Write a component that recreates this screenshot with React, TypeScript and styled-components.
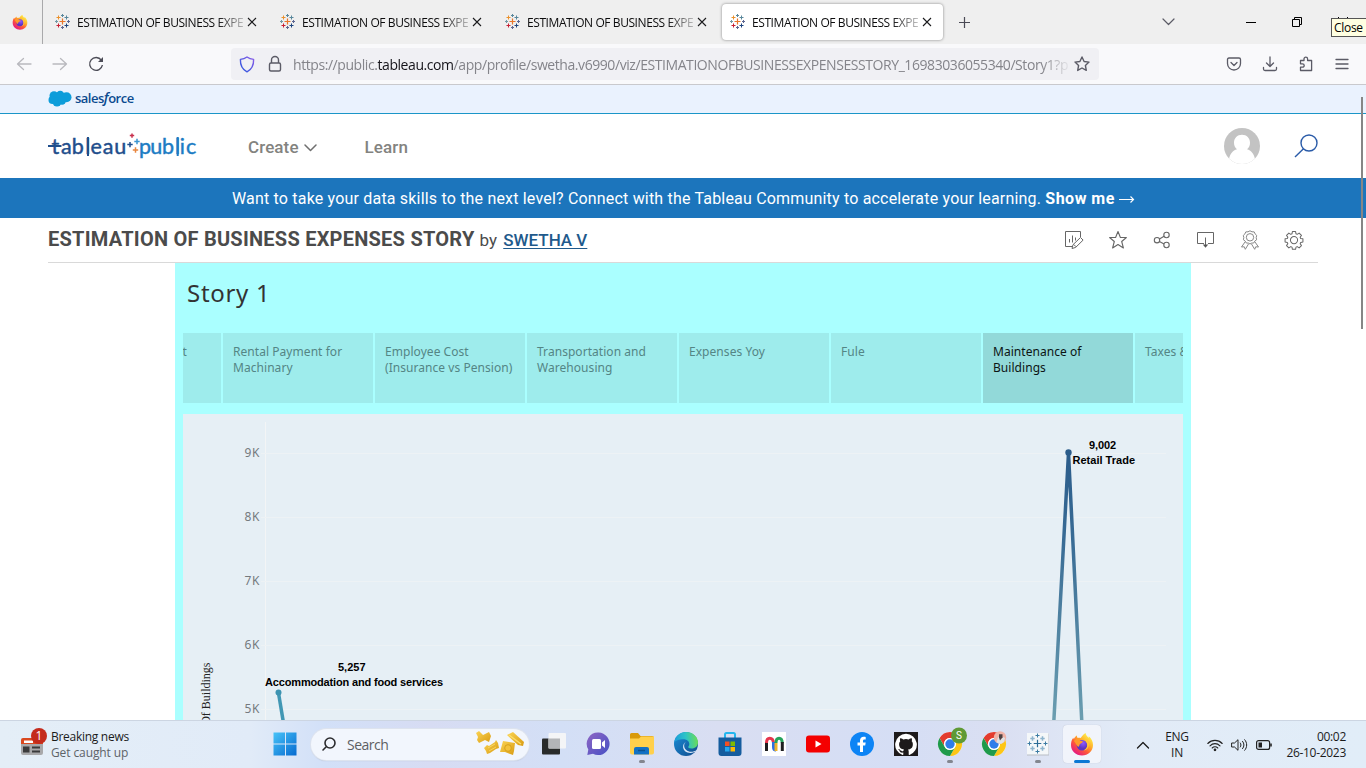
import React from 'react';
import styled, { createGlobalStyle, css } from 'styled-components';

const GlobalStyle = createGlobalStyle`
  * { box-sizing: border-box; }
  body { margin: 0; overflow: hidden; background: #fff; }
  svg { display: block; flex: none; }
`;

const segoe = css`font-family: 'Open Sans', 'Noto Sans', sans-serif;`;
const benton = css`font-family: Roboto, 'Liberation Sans', sans-serif;`;

const Screen = styled.div`
  position: relative;
  width: 1366px;
  height: 768px;
  display: flex;
  flex-direction: column;
  overflow: hidden;
  ${segoe}
`;

/* ---------- browser chrome ---------- */

const TabStrip = styled.div`
  height: 44px;
  flex: none;
  display: flex;
  align-items: center;
  background: #efefef;
`;
const PinnedTab = styled.div`
  width: 43px;
  height: 44px;
  padding: 14px 0 0 12px;
  margin-right: 4px;
  border-right: 1px solid #a9a9ab;
`;
const Tab = styled.div<{ $active?: boolean }>`
  width: 221px;
  height: 36px;
  margin-right: 4px;
  padding: 0 11px 0 8px;
  display: flex;
  align-items: center;
  border-radius: 4px;
  background: ${p => (p.$active ? '#fff' : 'transparent')};
  box-shadow: ${p => (p.$active ? '0 0 3px rgba(0,0,0,.45)' : 'none')};
`;
const TabTitle = styled.span`
  width: 168px;
  margin: 0 2px 0 6px;
  white-space: nowrap;
  font-size: 12px;
  letter-spacing: -0.42px;
  line-height: 18px;
  padding-top: 1px;
  color: #0c0c0d;
  mask-image: linear-gradient(to right, #000 83%, transparent 104%);
`;
const Spacer = styled.div`flex: 1;`;
const WindowControls = styled.div`
  display: flex;
  align-items: center;
  gap: 36px;
  padding: 0 18px 0 71px;
`;
const CloseTip = styled.div`
  position: absolute;
  left: 1331px;
  top: 18px;
  width: 36px;
  height: 19px;
  border: 1px solid #555;
  background: #ffffe1;
  color: #000;
  font-size: 12px;
  line-height: 18px;
  padding-left: 2px;
  letter-spacing: -0.3px;
`;

const Toolbar = styled.div`
  height: 41px;
  flex: none;
  display: flex;
  align-items: center;
  background: #f9f9fb;
  border-bottom: 1px solid #c9c9cd;
`;
const NavButtons = styled.div`
  width: 231px;
  padding-left: 16px;
  display: flex;
  gap: 20px;
`;
const UrlBar = styled.div`
  width: 868px;
  height: 32px;
  padding: 0 8px 0 8px;
  display: flex;
  align-items: center;
  background: #f0f0f4;
  border-radius: 4px;
`;
const Url = styled.span`
  width: 775px;
  margin: 0 6px 0 10px;
  padding-top: 2px;
  white-space: nowrap;
  font-size: 14px;
  letter-spacing: -0.43px;
  line-height: 22px;
  color: #84848a;
  mask-image: linear-gradient(to right, #000 96.5%, transparent 100.5%);
  b { font-weight: 400; color: #15141a; }
`;
const ToolIcons = styled.div`
  display: flex;
  gap: 20px;
  margin-left: 127px;
`;

/* ---------- page ---------- */

const SalesforceBar = styled.div`
  height: 29px;
  flex: none;
  padding: 0 0 1px 48px;
  display: flex;
  align-items: center;
  gap: 3px;
  background: #eaf2fe;
  border-bottom: 1px solid #1b96c8;
`;
const SalesforceName = styled.span`
  font: 600 13px/18px 'Open Sans', sans-serif;
  color: #0b4a8f;
  letter-spacing: -0.5px;
  padding-bottom: 2px;
  i { font-size: 14px; }
`;
const Header = styled.header`
  height: 64px;
  flex: none;
  padding: 0 48px;
  display: flex;
  align-items: center;
  background: #fff;
`;
const HeaderLink = styled.a<{ $left: number }>`
  ${benton}
  display: flex;
  align-items: center;
  gap: 5px;
  margin-left: ${p => p.$left}px;
  padding-top: 2px;
  font-size: 17px;
  font-weight: 500;
  letter-spacing: 0.1px;
  color: #83837f;
`;
const Banner = styled.div`
  ${benton}
  height: 40px;
  flex: none;
  display: flex;
  align-items: center;
  padding-left: 232px;
  white-space: pre;
  background: #1c75bc;
  color: #fff;
  font-size: 16px;
  letter-spacing: 0.185px;
  b { font-weight: 700; letter-spacing: 0.5px; }
`;
const TitleRow = styled.div`
  ${benton}
  height: 45px;
  flex: none;
  margin: 0 48px;
  display: flex;
  align-items: center;
  border-bottom: 1px solid #d9d9d9;
`;
const VizTitle = styled.h1`
  margin: 0;
  padding-bottom: 2px;
  font-size: 20px;
  font-weight: 700;
  letter-spacing: 0.24px;
  color: #4b4b4b;
  white-space: nowrap;
`;
const Author = styled.span`
  margin-left: 5px;
  font-size: 17px;
  color: #4b4b4b;
  a { margin-left: 2px; font-weight: 500; color: #1f5a8c; text-decoration: underline; text-underline-offset: 2px; }
`;
const Actions = styled.div`
  display: flex;
  gap: 24px;
  padding-right: 14px;
`;

const Story = styled.main`
  flex: 1;
  min-height: 0;
  width: 1016px;
  margin-left: 175px;
  padding: 0 8px;
  overflow: hidden;
  background: #aaffff;
`;
const StoryTitle = styled.h2`
  margin: 0;
  height: 70px;
  padding: 13px 0 0 4px;
  font: 400 24px/34px 'Noto Sans', sans-serif;
  letter-spacing: 0.7px;
  color: #333;
`;
const StoryPoints = styled.div`
  display: flex;
  gap: 2px;
  height: 70px;
  overflow: hidden;
  margin-bottom: 11px;
`;
const Point = styled.div<{ $active?: boolean; $first?: boolean }>`
  flex: none;
  width: 150px;
  margin-left: ${p => (p.$first ? -112 : 0)}px;
  padding: 11px 10px;
  text-align: ${p => (p.$first ? 'right' : 'left')};
  padding-right: ${p => (p.$first ? 34 : 4)}px;
  font: 400 12px/16px 'Noto Sans', sans-serif;
  white-space: pre-line;
  letter-spacing: 0.05px;
  background: ${p => (p.$active ? '#92d9d9' : '#9eecec')};
  color: ${p => (p.$active ? '#0c1414' : '#548585')};
`;
const AxisText = styled.text`
  font: 12px 'Noto Sans', sans-serif;
  fill: #757a7e;
`;
const MarkText = styled.text`
  font: bold 11px 'Liberation Sans', Arial, sans-serif;
  fill: #000;
`;
const AxisTitle = styled.text`
  font: 12px 'Liberation Serif', serif;
  fill: #222;
`;
const PageScroll = styled.div`
  position: absolute;
  left: 1361px;
  top: 97px;
  width: 2px;
  height: 232px;
  background: #868686;
`;

/* ---------- taskbar ---------- */

const Taskbar = styled.div`
  height: 48px;
  flex: none;
  display: flex;
  align-items: center;
  border-top: 1px solid #ccd5e2;
  background: linear-gradient(90deg, #e4eef7 0, #e1ebf8 250px, #d2e0f8 325px, #d7dcf3 430px, #d3dff6 560px, #d9def2 720px, #d5def5 900px, #dadff2 1000px, #e2ebf7 1130px, #e1edf8 100%);
`;
const News = styled.div`
  width: 263px;
  padding: 0 0 3px 18px;
  display: flex;
  align-items: center;
  gap: 3px;
`;
const NewsText = styled.div`
  font-size: 12px;
  line-height: 16px;
  color: #1b1b1b;
  letter-spacing: -0.28px;
  padding-top: 4px;
  span { display: block; color: #5e6368; letter-spacing: -0.1px; }
`;
const Slot = styled.div<{ $dot?: boolean; $active?: boolean }>`
  position: relative;
  width: 44px;
  height: 47px;
  padding-bottom: 2px;
  display: flex;
  align-items: center;
  justify-content: center;
  &::after {
    content: '';
    display: ${p => (p.$dot || p.$active ? 'block' : 'none')};
    position: absolute;
    bottom: 5px;
    width: ${p => (p.$active ? 16 : 6)}px;
    height: 3px;
    border-radius: 2px;
    background: ${p => (p.$active ? '#0a78d4' : '#83868f')};
  }
`;
const ActivePlate = styled.div`
  width: 38px;
  height: 38px;
  display: flex;
  align-items: center;
  justify-content: center;
  border-radius: 4px;
  background: #f1f4fb;
  box-shadow: 0 0 1px rgba(0,0,0,.2);
`;
const SearchPill = styled.div`
  width: 218px;
  height: 31px;
  margin: 0 3px 1px 4px;
  padding: 0 4px 0 10px;
  display: flex;
  align-items: center;
  border-radius: 16px;
  background: #f2f6fd;
  box-shadow: 0 0 0 1px #dde3ee, 0 1px 1px #a9b2c6;
  font-size: 14px;
  letter-spacing: -0.5px;
  color: #5d5f63;
  span { margin-left: 10px; flex: 1; }
`;
const Tray = styled.div`
  flex: 1;
  display: flex;
  align-items: center;
  padding: 0 20px 0 32px;
  font-size: 12px;
  line-height: 16px;
  letter-spacing: -0.3px;
  color: #1b1b1b;
`;
const Lang = styled.div`
  width: 30px;
  margin: 0 15px 0 12px;
  padding-top: 1px;
  text-align: center;
  font-size: 12px;
`;
const TrayIcons = styled.div`
  display: flex;
  gap: 8px;
`;
const Clock = styled.div`
  flex: 1;
  white-space: nowrap;
  text-align: right;
`;

/* ---------- icons ---------- */

const plus = (x: number, y: number, r: number) => `M${x - r} ${y}H${x + r}M${x} ${y - r}V${y + r}`;

const TableauMark = () => (
  <svg width="16" height="16" viewBox="0 0 16 16" fill="none" strokeWidth="1">
    <path d={plus(7.5, 7.5, 3)} stroke="#e8762c" strokeWidth="1.200" />
    <path d={plus(3.5, 3.5, 2)} stroke="#eb912c" />
    <path d={plus(11.5, 3.5, 2)} stroke="#59879b" />
    <path d={plus(3.5, 11.5, 2)} stroke="#c72035" />
    <path d={plus(11.5, 11.5, 2)} stroke="#1f457e" />
    <path d={plus(7.5, 1.500, 1.500)} stroke="#59879b" />
    <path d={plus(7.5, 13.500, 1.500)} stroke="#5c6692" />
    <path d={plus(1.500, 7.5, 1.500)} stroke="#7199a6" />
    <path d={plus(13.500, 7.5, 1.500)} stroke="#5c6692" />
  </svg>
);

const Firefox = ({ size }: { size: number }) => (
  <svg width={size} height={size} viewBox="0 0 24 24">
    <defs>
      <linearGradient id="fxBody" x1="0.85" y1="0.1" x2="0.2" y2="0.95">
        <stop offset="0" stopColor="#fff44f" />
        <stop offset=".35" stopColor="#ffb02a" />
        <stop offset=".62" stopColor="#ff5a36" />
        <stop offset="1" stopColor="#e31587" />
      </linearGradient>
      <radialGradient id="fxCore" cx=".6" cy=".3">
        <stop offset="0" stopColor="#9059ff" />
        <stop offset="1" stopColor="#5b34c4" />
      </radialGradient>
    </defs>
    <path fill="url(#fxBody)" d="M15.600 1c.3 2.300 1.700 3.300 3 4.900.2-.7.2-1.200.1-1.700C21.500 6.500 23 9.500 23 13c0 5.900-4.900 10.500-11 10.500S1 19 1 13c0-2.800.7-5.300 2.300-7.300.1.600.3 1 .6 1.300C4.700 5.500 5.700 4.300 6.800 3.600c0 1 .3 1.800.9 2.300 1-.2 2-.2 3 0C12.300 4.200 13.200 2 15.600 1z" />
    <circle cx="12" cy="13.200" r="5.300" fill="url(#fxCore)" />
    <path fill="#ff9a2b" d="M3.900 9c1.700-2 4-2.800 6.500-2.300-.7.800-.8 1.400-.5 1.800.6.700 2.300.5 3.100 1.100-.3 1.200-2.200 1.600-3.200 2.700-.8.900-.1 2.300-1.600 2.500-1.400-.6-2.300-3.600-4.300-5.800z" />
    <path fill="#ffc83a" d="M14 7c3 .6 5 3 4.800 6.300-.3 3-2.400 5-5.200 5.300 2.700-1.500 3.900-3.500 3.600-6C16.900 10.300 15.700 8.500 14 7z" />
  </svg>
);

const CloseX = () => (
  <svg width="10" height="10" viewBox="0 0 10 10" stroke="#1b1b1d" strokeWidth="1.100">
    <path d="M1 1l8 8M9 1L1 9" />
  </svg>
);

const Line = ({ d, w = 16, h = 16, color = '#5b5b66', sw = 1.3, fill = 'none' }: { d: string; w?: number; h?: number; color?: string; sw?: number; fill?: string }) => (
  <svg width={w} height={h} viewBox={`0 0 ${w} ${h}`} fill={fill} stroke={color} strokeWidth={sw} strokeLinecap="round" strokeLinejoin="round">
    <path d={d} />
  </svg>
);

const Reload = () => (
  <svg width="16" height="16" viewBox="0 0 16 16" fill="none" stroke="#4d4d57" strokeWidth="1.400">
    <path d="M13.300 4.200A6.400 6.400 0 1 0 14.400 9" />
    <path d="M15 1v5h-5z" fill="#4d4d57" stroke="none" />
  </svg>
);

const Shield = () => (
  <svg width="16" height="17" viewBox="0 0 16 17" fill="none">
    <defs>
      <linearGradient id="shield" x1="1" y1="0" x2="0" y2="1">
        <stop offset="0" stopColor="#8a5be8" />
        <stop offset="1" stopColor="#2a59dd" />
      </linearGradient>
    </defs>
    <path d="M8 1c2 1.500 4 2.200 6.600 2.400.2 5.600-1.400 9.600-6.600 12.400C2.800 13 1.200 9 1.400 3.400 4 3.200 6 2.500 8 1z" stroke="url(#shield)" strokeWidth="1.400" strokeLinejoin="round" />
  </svg>
);

const SalesforceCloud = () => (
  <svg width="24" height="17" viewBox="0 0 24 17" fill="#0d9dda">
    <circle cx="6" cy="5.800" r="4.500" /><circle cx="12.200" cy="5" r="4.200" /><circle cx="18.500" cy="7.300" r="5" />
    <circle cx="4.600" cy="10" r="4.100" /><circle cx="9" cy="12" r="4.500" /><circle cx="14" cy="10.500" r="4.200" />
  </svg>
);

const TableauPublic = () => (
  <svg width="150" height="30" viewBox="0 0 150 30">
    <g fontFamily="Lato, sans-serif" fontSize="21.500" strokeWidth=".45">
      <text x="3.500 13 23.800 37.200 42.600 54.800 66.200" y="23" fill="#1f4e8c" stroke="#1f4e8c">tableau</text>
      <text x="91 102.300 114 126.900 131.700 138" y="23" fill="#1c7cc4" stroke="#1c7cc4">public</text>
    </g>
    <g fill="none" strokeWidth="2">
      <path d="M0 15h13.500" stroke="#1f4e8c" />
      <path d="M40 6v19" stroke="#1f4e8c" />
      <path d="M129.700 6v19" stroke="#1c7cc4" />
    </g>
    <g fill="none" strokeWidth="1.500">
      <path d={plus(84, 4.600, 2.200)} stroke="#c8324f" />
      <path d={plus(82, 13.600, 2.700)} stroke="#1f4e8c" />
      <path d={plus(89, 10.500, 2.700)} stroke="#3b95d0" />
      <path d={plus(87.500, 19, 2.700)} stroke="#e8863f" />
    </g>
  </svg>
);

const Avatar = () => (
  <svg width="36" height="36" viewBox="0 0 36 36">
    <clipPath id="face"><circle cx="18" cy="18" r="18" /></clipPath>
    <g clipPath="url(#face)">
      <rect width="36" height="36" fill="#c3c3c3" />
      <path d="M18 6.800c4.700 0 8 3.400 8 7.900 0 2.800-1 5.100-3 6.600 4.300 1.200 7 4.800 8 9.700V36H5v-5c1-4.900 3.700-8.500 8-9.700-2-1.500-3-3.800-3-6.600 0-4.500 3.300-7.900 8-7.900z" fill="#fff" />
    </g>
  </svg>
);

const GearIcon = () => (
  <svg width="20" height="20" viewBox="0 0 20 20" fill="none" stroke="#666" strokeWidth="1.100" strokeLinejoin="round">
    <g transform="translate(.8 .4) scale(.92)">
      <path d="M8.300 1.300h3.400l.5 2.400 1.300.6 2.100-1.400 2.500 2.500-1.400 2.100.6 1.300 2.400.4v3.500l-2.400.4-.6 1.300 1.400 2.100-2.500 2.500-2.100-1.400-1.300.6-.5 2.400H8.300l-.5-2.400-1.300-.6-2.100 1.400-2.500-2.500 1.400-2.100-.6-1.300-2.400-.4V9.200l2.400-.4.6-1.300L1.900 5.400l2.500-2.500 2.100 1.400 1.300-.6z" />
      <circle cx="10" cy="10.500" r="3.900" />
    </g>
  </svg>
);

const RosetteIcon = () => (
  <svg width="20" height="20" viewBox="0 0 20 20" fill="none" stroke="#888" strokeWidth="1">
    <path d="M10 .8l2 1 2.200.1.900 2 1.600 1.500-.5 2.200.4 2.200-1.800 1.300-1.100 1.900-2.200.1-1.500.9-1.500-.9-2.200-.1-1.100-1.900-1.800-1.300.4-2.200-.5-2.200 1.600-1.500.9-2L8 1.800z" />
    <circle cx="10" cy="7.300" r="3.700" />
    <path d="M5 12l-3.500 5 2.800-.2 1 2.500 3.400-5.600M15 12l3.500 5-2.800-.2-1 2.500-3.400-5.600" />
  </svg>
);

const ShareIcon = () => (
  <svg width="20" height="20" viewBox="0 0 20 20" fill="none" stroke="#666" strokeWidth="1.100">
    <circle cx="5" cy="10.200" r="2.700" /><circle cx="14.500" cy="5" r="2.700" /><circle cx="14.500" cy="15" r="2.700" />
    <path d="M7.400 9l4.700-2.700M7.400 11.500l4.700 2.500" />
  </svg>
);

const DownloadBox = () => (
  <svg width="20" height="20" viewBox="0 0 20 20" fill="none" stroke="#666" strokeWidth="1">
    <path d="M8 13.500H1.500v-11h16v11H12M9.500 7.500v8" />
    <path d="M6.800 14.500h5.400L9.500 17.800z" fill="#555" stroke="none" />
  </svg>
);

const EditChart = () => (
  <svg width="20" height="20" viewBox="0 0 20 20" fill="none" stroke="#666" strokeWidth="1">
    <path d="M8 16.500H1.500v-15h15V7M5.500 12.500V9M8.500 12.500v-7M11.500 10.500v-3" />
    <path d="M8 18.500l1-3.800 7.500-7.200 2.600 2.600-7.400 7.300zM9.700 14.400l2.400 2.400" />
  </svg>
);

const NewsIcon = () => (
  <svg width="30" height="30" viewBox="0 0 30 30">
    <rect x="3" y="10" width="22" height="10" rx="2" fill="#d9481f" />
    <rect x="6" y="12.500" width="9" height="2.500" fill="#fff" />
    <path d="M3 16h22v9a2 2 0 0 1-2 2H5a2 2 0 0 1-2-2z" fill="#a8a8aa" />
    <path d="M5 18.500h6.500v6H5zM14 18.500h8v2h-8zM14 22.500h8v2h-8z" fill="#3a3a3b" />
    <circle cx="21" cy="8" r="8" fill="#c42b1c" />
    <text x="21" y="12" fontSize="12" fill="#fff" textAnchor="middle" fontFamily="Open Sans, sans-serif">1</text>
  </svg>
);

const WindowsLogo = () => (
  <svg width="24" height="24" viewBox="0 0 24 24">
    <defs><linearGradient id="win" x1="0" y1="0" x2="24" y2="24" gradientUnits="userSpaceOnUse"><stop stopColor="#49c5f9" /><stop offset="1" stopColor="#0468cf" /></linearGradient></defs>
    <path fill="url(#win)" d="M.5.500H12v11H.5zM13 .5h10.500v11H13zM.5 12.500H12v11H.5zM13 12.500h10.500v11H13z" />
  </svg>
);

const Pasta = () => (
  <svg width="50" height="28" viewBox="0 0 50 28">
    <defs><linearGradient id="pasta" x1="0" y1="0" x2="1" y2="1"><stop stopColor="#fbd454" /><stop offset="1" stopColor="#d99b12" /></linearGradient></defs>
    <path d="M1 3l3-2 4 4 6-3 2 4-2 6-4-2-6 3-2-3 1-3z" fill="url(#pasta)" />
    <path d="M9 18l3-3 2 1 6-4 1-2 2 3 1 5-3 1-6 4-3 1-1-3z" fill="url(#pasta)" />
    <path d="M13 18l7-4M14 21l7-4" stroke="#f9dc6b" strokeWidth=".8" />
    <path d="M28 11l6 1 6 1-1 8-1 4-8-3-5 0z" fill="url(#pasta)" />
    <circle cx="33" cy="18" r="3.300" fill="#f3c23c" stroke="#d19a15" strokeWidth=".8" />
    <path d="M32 5l6-3 11 10-1 4-5-1z" fill="url(#pasta)" />
    <path d="M34 5l12 9" stroke="#fbdc69" strokeWidth="1.500" />
  </svg>
);

const TaskView = () => (
  <svg width="24" height="24" viewBox="0 0 24 24">
    <rect x="0" y="6.500" width="18" height="16" rx="1" fill="#292b2b" />
    <rect x="6.500" y="1" width="17.500" height="15.500" rx="1" fill="#f4f5f7" />
    <rect x="6.500" y="6.500" width="11.500" height="10" fill="#b3b5b8" />
  </svg>
);

const ChatIcon = () => (
  <svg width="24" height="24" viewBox="0 0 24 24">
    <defs><linearGradient id="chat" x1="0" y1="0" x2="1" y2="1"><stop stopColor="#8f66c4" /><stop offset="1" stopColor="#4650c4" /></linearGradient></defs>
    <path d="M12.500.5A11.300 11.300 0 1 1 7 21.800L1.300 23l1-5.500A11.300 11.300 0 0 1 12.500.5z" fill="url(#chat)" />
    <rect x="6" y="7" width="9" height="10" rx="1.500" fill="#fff" />
    <path d="M16 10.500L19 8v8l-3-2.500z" fill="#fff" />
  </svg>
);

const FolderIcon = () => (
  <svg width="26" height="24" viewBox="0 0 26 24">
    <path d="M1 2.500A1.500 1.500 0 0 1 2.500 1H9l2.500 3H23a2 2 0 0 1 2 2v6H1z" fill="#d99a0b" />
    <path d="M1 6.500h9l2-2H25v16a2 2 0 0 1-2 2H3a2 2 0 0 1-2-2z" fill="#ffd04c" />
    <path d="M5 22.500V17a2 2 0 0 1 2-2h11a2 2 0 0 1 2 2v5.500z" fill="#1271c4" />
    <path d="M9 18.500h7" stroke="#0c528f" strokeWidth="1.500" />
  </svg>
);

const EdgeIcon = () => (
  <svg width="24" height="24" viewBox="0 0 24 24">
    <defs>
      <linearGradient id="edgeTop" x1="0" y1=".5" x2="1" y2=".4"><stop stopColor="#1c9bdb" /><stop offset=".5" stopColor="#2cc3c7" /><stop offset="1" stopColor="#6ede52" /></linearGradient>
      <linearGradient id="edgeLow" x1="0" y1="0" x2="1" y2="1"><stop stopColor="#1a8fd9" /><stop offset="1" stopColor="#114a8b" /></linearGradient>
    </defs>
    <circle cx="12" cy="12" r="12" fill="url(#edgeLow)" />
    <path d="M.2 10.500C1 4.500 6 0 12 0c7 0 12 5 12 10.500 0 3.800-3 6-6.300 6-2.800 0-3.900-1-3.300-2 .7-.9.900-1.600.9-2.500C15.300 9.500 13 7.300 9.500 7.300 5 7.300 1 9 .2 10.500z" fill="url(#edgeTop)" />
    <path d="M12.500 9.500c-2.700 1.500-3.300 5.500-.5 8.300 3 2.900 7.500 2.500 11 .2l-.8 1.300c-1.500 1-5 2.200-8.700 1.200-5-1.500-6.300-8.500-1-11z" fill="#d9e6f8" />
  </svg>
);

const StoreIcon = () => (
  <svg width="24" height="24" viewBox="0 0 24 24">
    <path d="M7 6V2.500A1.500 1.500 0 0 1 8.500 1h7A1.500 1.500 0 0 1 17 2.500V6" fill="none" stroke="#23b6ee" strokeWidth="2" />
    <path d="M.5 5.500h23V21a3 3 0 0 1-3 3h-17a3 3 0 0 1-3-3z" fill="#155c9e" />
    <path d="M7 9.500h4.500V14H7z" fill="#f25022" /><path d="M12.500 9.500H17V14h-4.500z" fill="#7fba00" />
    <path d="M7 15h4.500v4.500H7z" fill="#23a7f0" /><path d="M12.500 15H17v4.500h-4.500z" fill="#ffb900" />
  </svg>
);

const ArchesIcon = () => (
  <svg width="24" height="24" viewBox="0 0 24 24" fill="none" strokeWidth="3">
    <rect width="24" height="24" fill="#fff" />
    <path d="M4.500 19v-9" stroke="#1e1e20" /><path d="M4.500 11c0-6.500 6.500-6.500 7 0" stroke="#e6354c" />
    <path d="M11.500 10v5c0 3 2 3 2.500 3" stroke="#2f6ee0" /><path d="M14 19v-8" stroke="#eeb32a" />
    <path d="M14 11c0-6.500 6-6.500 6.300 0" stroke="#25a35a" /><path d="M20.300 10v9" stroke="#1e1e20" />
  </svg>
);

const YouTubeIcon = () => (
  <svg width="24" height="24" viewBox="0 0 24 24">
    <rect x="0" y="3.500" width="24" height="17" rx="3" fill="#f40000" />
    <path d="M9.500 8.500v7l6-3.500z" fill="#fff" />
  </svg>
);

const FacebookIcon = () => (
  <svg width="24" height="24" viewBox="0 0 24 24">
    <circle cx="12" cy="12" r="12" fill="#0d84f5" />
    <path d="M10 20v-6.500H7.500v-3H10V8.500C10 6 11.500 4.700 13.700 4.700c1 0 2 .2 2 .2v2.500h-1.200c-1.200 0-1.500.7-1.500 1.500v1.600h2.700l-.5 3H13V20z" fill="#fff" />
  </svg>
);

const GitHubIcon = () => (
  <svg width="24" height="24" viewBox="0 0 24 24">
    <rect width="24" height="24" fill="#1d1a1b" />
    <path transform="translate(1.200 1.600) scale(.9)" fill="#fff" d="M12 .3a12 12 0 0 0-3.800 23.400c.6.100.8-.3.800-.6v-2c-3.300.700-4-1.600-4-1.600-.6-1.400-1.400-1.800-1.400-1.800-1-.7.100-.7.100-.7 1.200 0 1.900 1.200 1.900 1.200 1 1.800 2.800 1.300 3.500 1 0-.8.400-1.300.7-1.600-2.700-.3-5.500-1.300-5.500-6 0-1.200.5-2.300 1.300-3.100-.2-.4-.6-1.600 0-3.200 0 0 1-.3 3.400 1.200a11.500 11.500 0 0 1 6 0c2.300-1.500 3.300-1.200 3.300-1.200.6 1.600.2 2.800 0 3.200.9.800 1.300 1.900 1.300 3.200 0 4.600-2.800 5.600-5.500 5.900.5.400.9 1.100.9 2.200v3.300c0 .3.100.7.800.6A12 12 0 0 0 12 .3" />
  </svg>
);

const ChromeIcon = ({ badge }: { badge: 'letter' | 'photo' }) => (
  <svg width="30" height="30" viewBox="0 0 30 30">
    <circle cx="15" cy="15" r="12" fill="#fff" />
    <path d="M4.600 9A12 12 0 0 1 25.400 9H15a6 6 0 0 0-5.200 9z" fill="#e33b2e" />
    <path d="M25.400 9A12 12 0 0 1 15 27l5.200-9A6 6 0 0 0 15 9z" fill="#fdc615" />
    <path d="M15 27A12 12 0 0 1 4.600 9l5.200 9a6 6 0 0 0 10.400 0z" fill="#1f9a4b" />
    <circle cx="15" cy="15" r="6" fill="#fff" />
    <circle cx="15" cy="15" r="4.700" fill="#2f7de9" />
    {badge === 'letter' ? (
      <>
        <circle cx="24" cy="6.500" r="8" fill="#5f9a35" />
        <text x="24" y="10" fontSize="10" fill="#fff" textAnchor="middle" fontFamily="Roboto, sans-serif">S</text>
      </>
    ) : (
      <>
        <circle cx="21" cy="8.500" r="6.200" fill="#f0b3a8" />
        <path d="M17.500 13.500l1.500-5 2-1 1 3 2-2.500 2 1-1 4-3 2z" fill="#dfe3e5" />
        <path d="M20 5.300h3.500v3L21 11.500l-1-3z" fill="#4c4143" />
      </>
    )}
  </svg>
);

const BadgedSlot = styled(Slot)`
  svg { overflow: visible; }
`;

const TableauApp = () => (
  <svg width="24" height="24" viewBox="0 0 24 24" fill="none">
    <rect x="1" y="1.500" width="22" height="22" fill="#b9bdc4" />
    <rect x="1" y="1" width="21.500" height="21.500" fill="#f4f7f9" />
    <path d={plus(11.500, 11.500, 3.800)} stroke="#2c6c96" strokeWidth="1.200" />
    <path d={[plus(11.500, 3.500, 2), plus(11.500, 19.500, 2), plus(3.500, 11.500, 2), plus(19.500, 11.500, 2)].join('')} stroke="#3c7ba3" strokeWidth="1" />
    <path d={[plus(6.500, 6.500, 2.200), plus(16.500, 6.500, 2.200), plus(6.500, 16.500, 2.200), plus(16.500, 16.500, 2.200)].join('')} stroke="#8db4cd" strokeWidth="1.500" />
  </svg>
);

const WifiIcon = () => (
  <svg width="16" height="16" viewBox="0 0 16 16" fill="none" stroke="#222" strokeWidth="1.100" strokeLinecap="round">
    <path d="M.8 6.500c4-4.200 10.400-4.200 14.400 0M3 8.800c2.800-2.900 7.200-2.900 10 0M5.200 11c1.600-1.700 4-1.700 5.600 0" />
    <circle cx="8" cy="12.800" r=".8" fill="#222" />
  </svg>
);
const SoundIcon = () => (
  <svg width="17" height="16" viewBox="0 0 17 16" fill="none" stroke="#222" strokeWidth="1" strokeLinecap="round" strokeLinejoin="round">
    <path d="M1 6h2.500L7 2.700v10.600L3.500 10H1zM9.300 6c.9 1.200.9 2.800 0 4M11.500 4.300c1.900 2.200 1.900 5.200 0 7.400M13.700 2.700c2.700 3 2.700 7.600 0 10.600" />
  </svg>
);
const BatteryIcon = () => (
  <svg width="17" height="16" viewBox="0 0 17 16" fill="none" stroke="#222" strokeWidth="1.200">
    <rect x=".6" y="3.600" width="13" height="8.800" rx="2" />
    <path d="M2.500 5.500H6v5H2.500z" fill="#222" stroke="none" />
    <path d="M15 6.500v3" strokeWidth="1.600" />
  </svg>
);

/* ---------- data ---------- */

const tabs = [false, false, false, true];
const points = [
  't',
  'Rental Payment for\nMachinary',
  'Employee Cost\n(Insurance vs Pension)',
  'Transportation and\nWarehousing',
  'Expenses Yoy',
  'Fule',
  'Maintenance of\nBuildings',
  'Taxes &',
];
const ticks = ['9K', '8K', '7K', '6K', '5K'];

const Chart = () => (
  <svg width="1000" height="306" viewBox="0 0 1000 306">
    <defs>
      <linearGradient id="peak" x1="0" y1="38" x2="0" y2="306" gradientUnits="userSpaceOnUse">
        <stop stopColor="#2b5c8a" /><stop offset=".35" stopColor="#3a6d96" /><stop offset="1" stopColor="#6b9eb0" />
      </linearGradient>
    </defs>
    <rect width="1000" height="306" fill="#e6eff5" />
    <path d="M82.500 8v298" stroke="#f3f5f6" />
    {ticks.map((t, i) => (
      <g key={t}>
        <path d={`M78 ${39.500 + i * 64}H983`} stroke="#edf2f5" />
        <AxisText x="76.500" y={43 + i * 64} textAnchor="end" textLength="15">{t}</AxisText>
      </g>
    ))}
    <path d="M95.500 279L100.500 309" stroke="#4197b4" strokeWidth="3.500" />
    <circle cx="95.500" cy="278.500" r="3" fill="#3c93b1" />
    <path d="M870.800 308L885.500 39L898.800 308" fill="none" stroke="url(#peak)" strokeWidth="3.500" strokeLinejoin="round" />
    <circle cx="885.500" cy="38.500" r="3.200" fill="#2b5c8a" />
    <MarkText x="155" y="257" textLength="27.500">5,257</MarkText>
    <MarkText x="82" y="272" textLength="178">Accommodation and food services</MarkText>
    <MarkText x="906" y="35" textLength="27">9,002</MarkText>
    <MarkText x="889.500" y="50" textLength="62.500">Retail Trade</MarkText>
    <AxisTitle transform="translate(27 248.500) rotate(-90)" textAnchor="end">Of Buildings</AxisTitle>
  </svg>
);

export default function App() {
  return (
    <Screen>
      <GlobalStyle />
      <TabStrip>
        <PinnedTab><Firefox size={16} /></PinnedTab>
        {tabs.map((active, i) => (
          <Tab key={i} $active={active}>
            <TableauMark />
            <TabTitle>ESTIMATION OF BUSINESS EXPE</TabTitle>
            <CloseX />
          </Tab>
        ))}
        <svg width="34" height="16" viewBox="0 0 34 16" stroke="#4a4a55" strokeWidth="1.200"><path d="M12 8.500h11M17.500 3v11" /></svg>
        <Spacer />
        <Line d="M1 3l5.500 5.500L12 3" w={13} h={12} color="#5b5b66" sw={1.200} />
        <WindowControls>
          <svg width="10" height="10" stroke="#000"><path d="M0 5.500h10" /></svg>
          <svg width="10" height="10" fill="none" stroke="#000"><path d="M.5 2.500h7v7h-7zM2.500 2.500v-2h7v7h-2" /></svg>
          <svg width="10" height="10" stroke="#000"><path d="M0 0l10 10M10 0L0 10" /></svg>
        </WindowControls>
      </TabStrip>
      <Toolbar>
        <NavButtons>
          <Line d="M15 8H1.500M7.500 2.500L1.500 8l6 5.500" color="#b9b9be" />
          <Line d="M1 8h13.500M8.500 2.500l6 5.500-6 5.500" color="#b9b9be" />
          <Reload />
        </NavButtons>
        <UrlBar>
          <Shield />
          <svg width="28" height="18" viewBox="0 0 28 18" fill="none" stroke="#5b5b66" strokeWidth="1.400">
            <rect x="14.500" y="8" width="11" height="8" rx="1.500" /><path d="M16.500 8V5a3.500 3.500 0 0 1 7 0v3" />
          </svg>
          <Url>https://public.<b>tableau.com</b>/app/profile/swetha.v6990/viz/ESTIMATIONOFBUSINESSEXPENSESSTORY_16983036055340/Story1?p</Url>
          <Line d="M8 1l2.100 4.500 4.900.6-3.600 3.400.9 4.900L8 12l-4.300 2.400.9-4.900L1 6.100l4.900-.6z" sw={1.400} />
        </UrlBar>
        <ToolIcons>
          <Line d="M3 2h10q1.500 0 1.500 1.500V7.500a6.500 6.500 0 0 1-13 0V3.500Q1.500 2 3 2zM5 6.500l3 3 3-3" />
          <Line d="M8 1v9M4.500 7L8 10.500 11.500 7M1.500 11.500v1.500q0 1.500 1.500 1.500h10q1.500 0 1.500-1.500v-1.500" />
          <Line d="M6 4.500V3a1.800 1.800 0 0 1 3.600 0v1.500h4v10H2.500v-3.300h2a1.600 1.600 0 0 0 0-3.400h-2V4.500z" />
          <Line d="M2 3.500h12M2 8h12M2 12.500h12" />
        </ToolIcons>
      </Toolbar>
      <SalesforceBar>
        <SalesforceCloud />
        <SalesforceName>sales<i>f</i>orce</SalesforceName>
      </SalesforceBar>
      <Header>
        <TableauPublic />
        <HeaderLink $left={50}>Create<Line d="M1 4l5.500 5.500L12 4" w={13} h={12} color="#6f6f6f" sw={1.500} /></HeaderLink>
        <HeaderLink $left={48}>Learn</HeaderLink>
        <Spacer />
        <Avatar />
        <svg width="58" height="24" viewBox="0 0 58 24" fill="none" stroke="#2a5ba8" strokeWidth="1.400">
          <circle cx="49" cy="9" r="8" /><path d="M43.500 14.700L35 23" />
        </svg>
      </Header>
      <Banner>Want to take your data skills to the next level? Connect with the Tableau Community to accelerate your learning. <b>Show me</b>
        <svg width="20" height="12" viewBox="0 0 20 12" fill="none" stroke="#fff" strokeWidth="1.200"><path d="M4 7.500h14.500M15.500 4.500l3 3-3 3" /></svg>
      </Banner>
      <TitleRow>
        <VizTitle>ESTIMATION OF BUSINESS EXPENSES STORY</VizTitle>
        <Author>by <a>SWETHA V</a></Author>
        <Spacer />
        <Actions>
          <EditChart />
          <Line w={20} h={20} d="M10 1.500l2.400 6h6l-4.700 4 1.700 6.500L10 14.500 4.600 18l1.700-6.500-4.700-4h6z" color="#666" sw={1.100} />
          <ShareIcon />
          <DownloadBox />
          <RosetteIcon />
          <GearIcon />
        </Actions>
      </TitleRow>
      <Story>
        <StoryTitle>Story 1</StoryTitle>
        <StoryPoints>
          {points.map((p, i) => (
            <Point key={p} $first={i === 0} $active={i === 6}>{p}</Point>
          ))}
        </StoryPoints>
        <Chart />
      </Story>
      <Taskbar>
        <News>
          <NewsIcon />
          <NewsText>Breaking news<span>Get caught up</span></NewsText>
        </News>
        <Slot><WindowsLogo /></Slot>
        <SearchPill>
          <Line d="M14 7a5 5 0 1 1-10 0 5 5 0 0 1 10 0zM5.500 10.500L2 14" color="#2b2b2e" sw={1.600} />
          <span>Search</span>
          <Pasta />
        </SearchPill>
        <Slot><TaskView /></Slot>
        <Slot><ChatIcon /></Slot>
        <Slot $dot><FolderIcon /></Slot>
        <Slot><EdgeIcon /></Slot>
        <Slot><StoreIcon /></Slot>
        <Slot><ArchesIcon /></Slot>
        <Slot><YouTubeIcon /></Slot>
        <Slot><FacebookIcon /></Slot>
        <Slot><GitHubIcon /></Slot>
        <BadgedSlot $dot><ChromeIcon badge="letter" /></BadgedSlot>
        <BadgedSlot><ChromeIcon badge="photo" /></BadgedSlot>
        <Slot $dot><TableauApp /></Slot>
        <Slot $active><ActivePlate><Firefox size={24} /></ActivePlate></Slot>
        <Tray>
          <Line d="M1.500 9L7 3.500 12.500 9" w={14} h={12} color="#1b1b1b" sw={1.300} />
          <Lang>ENG<br />IN</Lang>
          <TrayIcons><WifiIcon /><SoundIcon /><BatteryIcon /></TrayIcons>
          <Clock>00:02<br />26-10-2023</Clock>
        </Tray>
      </Taskbar>
      <PageScroll />
      <CloseTip>Close</CloseTip>
    </Screen>
  );
}
